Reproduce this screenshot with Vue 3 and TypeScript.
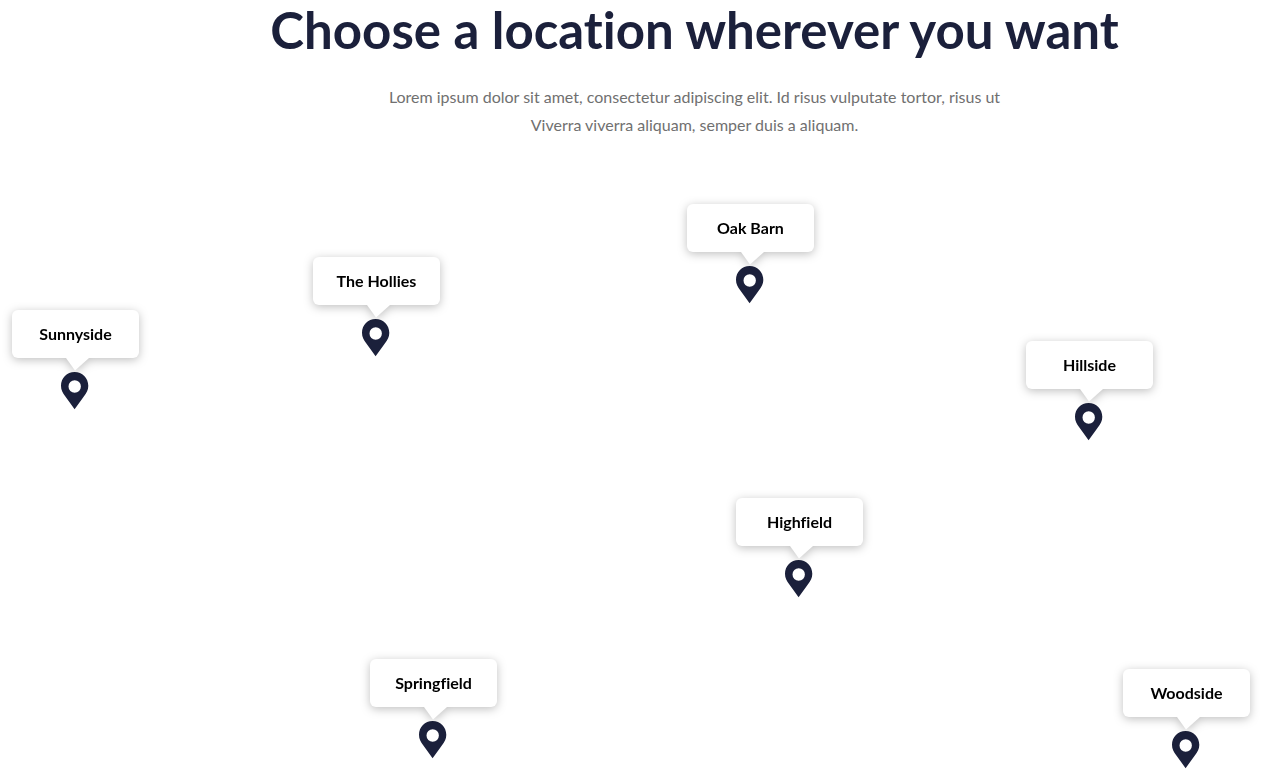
<script setup lang="ts">
interface Place {
  name: string
  x: number
  y: number
}

// Top-left corner of each marker on the map canvas, in pixels.
const places: Place[] = [
  { name: 'Sunnyside', x: 12, y: 171 },
  { name: 'The Hollies', x: 313, y: 118 },
  { name: 'Oak Barn', x: 687, y: 65 },
  { name: 'Hillside', x: 1026, y: 202 },
  { name: 'Highfield', x: 736, y: 359 },
  { name: 'Springfield', x: 370, y: 520 },
  { name: 'Woodside', x: 1123, y: 530 },
]
</script>

<template>
  <main class="locations">
    <header class="intro">
      <h1>Choose a location wherever you want</h1>
      <p>
        Lorem ipsum dolor sit amet, consectetur adipiscing elit. Id risus vulputate tortor, risus ut<br />
        Viverra viverra aliquam, semper duis a aliquam.
      </p>
    </header>

    <ul class="map">
      <li
        v-for="place in places"
        :key="place.name"
        class="marker"
        :style="{ left: `${place.x}px`, top: `${place.y}px` }"
      >
        <div class="bubble">
          <span>{{ place.name }}</span>
          <svg class="tip" width="23" height="13" viewBox="0 0 23 13" aria-hidden="true">
            <path d="M0 0H23L9 12.6Z" fill="#fff" />
          </svg>
        </div>
        <svg class="pin" width="28" height="38" viewBox="0 0 28 38" aria-hidden="true">
          <path
            fill="#1b203b"
            fill-rule="evenodd"
            d="M13.6 0C6 0 0 6 0 13.7C0 18 1.6 20.6 4.2 24.2L13.6 37.2L23 24.2C25.6 20.6 27.3 18 27.3 13.7C27.3 6 21.2 0 13.6 0ZM13.7 8.3A6.2 6.2 0 1 1 13.7 20.7A6.2 6.2 0 1 1 13.7 8.3Z"
          />
        </svg>
      </li>
    </ul>
  </main>
</template>

<style>
body {
  margin: 0;
  background: #fff;
}
</style>

<style scoped>
.locations {
  font-family: Lato, 'Open Sans', sans-serif;
  font-variant-ligatures: none;
}

.intro {
  padding-left: 127px;
  text-align: center;
}

h1 {
  margin: 0 0 23px;
  color: #1b203b;
  font-size: 51px;
  font-weight: 700;
  line-height: 60px;
}

p {
  margin: 0;
  color: #707070;
  font-size: 16px;
  line-height: 28px;
}

.map {
  position: relative;
  height: 630px;
  margin: 0;
  padding: 0;
  list-style: none;
}

.marker {
  position: absolute;
  display: flex;
  flex-direction: column;
  gap: 14px;
  width: 127px;
}

.bubble {
  position: relative;
  display: flex;
  align-items: center;
  justify-content: center;
  height: 48px;
  border-radius: 6px;
  background: #fff;
  color: #000;
  filter: drop-shadow(0 2px 5px rgba(0, 0, 0, 0.25));
  font-size: 16px;
  font-weight: 700;
  line-height: 24px;
}

.tip {
  position: absolute;
  top: 100%;
  left: 54px;
}

.pin {
  display: block;
  margin-left: 49px;
}
</style>
